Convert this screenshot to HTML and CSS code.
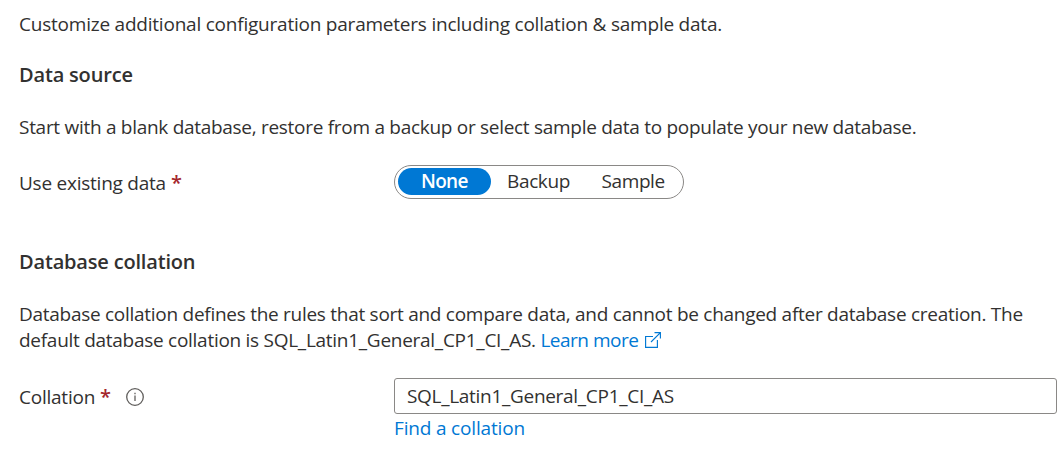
FILE: index.html
```html
<!DOCTYPE html>
<html lang="en">
<head>
<meta charset="utf-8">
<title>Additional settings</title>
<link rel="stylesheet" href="styles.css">
</head>
<body>
<main class="page">
  <p class="intro">Customize additional configuration parameters including collation &amp; sample data.</p>
  <h2 class="heading h-source">Data source</h2>
  <p class="desc-source">Start with a blank database, restore from a backup or select sample data to populate your new database.</p>
  <div class="row row-source">
    <div class="label"><span class="label-text">Use existing data</span><span class="req">*</span></div>
    <div class="pills" role="radiogroup">
      <span class="pill selected">None</span>
      <span class="pill backup">Backup</span>
      <span class="pill sample">Sample</span>
    </div>
  </div>
  <h2 class="heading h-collation">Database collation</h2>
  <p class="desc-collation">Database collation defines the rules that sort and compare data, and cannot be changed after database creation. The<br>default database collation is SQL_Latin1_General_CP1_CI_AS. <a class="link learn">Learn more</a><svg class="ext" viewBox="0 0 16 16"><path d="M8 4.5H.6v10.9h11.8V8M9.5.6h5.9v5.9M15.4.6 6 10"/></svg></p>
  <div class="row row-collation">
    <div class="label"><span class="label-text">Collation</span><span class="req">*</span><svg class="info" viewBox="0 0 18 18"><circle cx="9" cy="9" r="8.3"/><path d="M9 7.5v5.5M9 4.8v1.5"/></svg></div>
    <div class="field">
      <div class="input">SQL_Latin1_General_CP1_CI_AS</div>
      <a class="link find">Find a collation</a>
    </div>
  </div>
</main>
</body>
</html>
```
FILE: styles.css
```css
* { box-sizing: border-box; }
body { margin: 0; background: #fff; color: #323130; font: 19px/26px "Segoe UI", "Open Sans", "Noto Sans", sans-serif; }
.page { width: 1064px; height: 455px; padding: 11px 7px 0 19px; overflow: hidden; white-space: nowrap; }
p, h2 { margin: 0; }
.heading { font-size: 20px; font-weight: 600; line-height: 26px; letter-spacing: -.18px; }
.intro { height: 51px; letter-spacing: -.22px; }
.h-source { height: 52px; }
.desc-source { height: 51px; letter-spacing: -.29px; }
.row { display: flex; }
.row-source { height: 84px; }
.label { display: flex; width: 375px; flex: none; padding-top: 5px; }
.label-text { letter-spacing: -.24px; }
.row-collation .label { padding-top: 6px; }
.req { margin-left: 5px; color: #a4262c; font-size: 20px; font-weight: 600; }
.pills { display: flex; width: 290px; height: 34px; padding: 2px 3px; border: 1px solid #8a8886; border-radius: 17px; }
.pill { height: 27px; text-align: center; letter-spacing: -.4px; }
.selected { width: 93px; background: #0078d4; color: #fff; border-radius: 14px; font-weight: 600; letter-spacing: -.7px; }
.backup { width: 96px; }
.sample { width: 94px; }
.h-collation { height: 52px; }
.desc-collation { height: 77px; letter-spacing: -.275px; }
.link { color: #0078d4; }
.learn { letter-spacing: -.5px; }
.ext { width: 16px; height: 16px; margin-left: 7px; vertical-align: -1px; fill: none; stroke: #0078d4; stroke-width: 1.15; }
.info { width: 18px; height: 18px; margin: 4px 0 0 15px; fill: none; stroke: #605e5c; stroke-width: 1.3; }
.field { width: 663px; }
.input { height: 36px; padding: 4px 12px; border: 1px solid #8a8886; border-radius: 3px; letter-spacing: -.3px; }
.find { display: inline-block; margin-top: 1px; letter-spacing: -.17px; }
```
